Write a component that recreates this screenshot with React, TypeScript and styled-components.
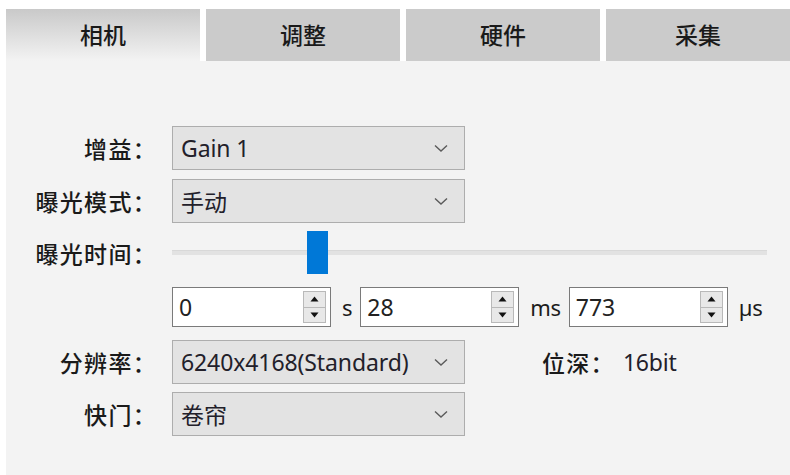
import React from "react";
import styled, { createGlobalStyle } from "styled-components";

const GlobalStyle = createGlobalStyle`
  html, body {
    margin: 0;
    padding: 0;
    background: #ffffff;
  }
  body {
    font-family: "Noto Sans", "Noto Sans CJK SC", sans-serif;
    color: #1c1c1c;
  }
`;

const Window = styled.div`
  width: 790px;
  height: 475px;
  padding: 9px 0 0 6px;
  box-sizing: border-box;
  display: flex;
  flex-direction: column;
  overflow: hidden;
`;

const TabBar = styled.div`
  display: flex;
  gap: 6px;
  height: 52px;
  flex: none;
`;

const Tab = styled.div<{ $active?: boolean; $grow?: boolean }>`
  width: ${(p) => (p.$grow ? "auto" : "194px")};
  flex: ${(p) => (p.$grow ? "1" : "none")};
  height: 52px;
  display: flex;
  align-items: center;
  justify-content: center;
  font-family: "Noto Sans CJK SC", sans-serif;
  font-weight: 500;
  font-size: 23px;
  color: #1a1a1a;
  background: ${(p) =>
    p.$active
      ? "linear-gradient(to bottom, #c9c9c9 0%, #dcdcdc 45%, #f3f3f3 100%)"
      : "#cbcbcb"};
  padding-bottom: 2px;
  box-sizing: border-box;
`;

const Panel = styled.div`
  flex: 1;
  background: #f3f3f3;
  padding-top: 65px;
`;

const Form = styled.div`
  display: flex;
  flex-direction: column;
`;

const Row = styled.div<{ $top: number; $h: number }>`
  display: flex;
  align-items: center;
  margin-top: ${(p) => p.$top}px;
  height: ${(p) => p.$h}px;
`;

const Label = styled.div`
  width: 151px;
  margin-right: 15px;
  text-align: right;
  font-family: "Noto Sans CJK SC", sans-serif;
  font-weight: 500;
  font-size: 23px;
  color: #1a1a1a;
  white-space: nowrap;
  letter-spacing: 1.3px;
`;

const Combo = styled.div`
  width: 293px;
  height: 100%;
  box-sizing: border-box;
  border: 1px solid #adadad;
  background: #e3e3e3;
  display: flex;
  align-items: center;
  padding: 0 16px 0 8px;
  font-size: 23px;
  color: #22202a;
`;

const ComboText = styled.span`
  flex: 1;
  white-space: nowrap;
  letter-spacing: -0.1px;
`;

const Chevron = () => (
  <svg width="14" height="9" viewBox="0 0 14 9">
    <path d="M1 1.5 L7 7 L13 1.5" fill="none" stroke="#5a5a5a" strokeWidth="1.4" />
  </svg>
);

const SliderTrack = styled.div`
  position: relative;
  width: 595px;
  height: 100%;
  display: flex;
  align-items: center;
`;

const Rail = styled.div`
  width: 100%;
  height: 5px;
  background: #e2e2e2;
  border-top: 1px solid #d8d8d8;
  box-sizing: border-box;
`;

const Thumb = styled.div`
  position: absolute;
  top: 0;
  width: 21px;
  height: 43px;
  background: #0078d7;
`;

const SpinBox = styled.div`
  width: 159px;
  height: 100%;
  box-sizing: border-box;
  border: 1px solid #7a7a7a;
  background: #ffffff;
  display: flex;
  align-items: flex-start;
  padding: 2px 4px 2px 6px;
  font-size: 23px;
  color: #222222;
`;

const SpinValue = styled.span`
  flex: 1;
  align-self: center;
`;

const SpinButtons = styled.div`
  width: 23px;
  height: 32px;
  display: flex;
  flex-direction: column;
  border: 1px solid #b9b9b9;
  box-sizing: border-box;
  margin-top: 1px;
`;

const SpinButton = styled.div`
  flex: 1;
  background: #e8e8e8;
  display: flex;
  align-items: center;
  justify-content: center;
  & + & {
    border-top: 1px solid #b9b9b9;
  }
`;

const Unit = styled.span`
  font-size: 22px;
  color: #1c1c1c;
  margin: 0 8px 0 11px;
  letter-spacing: -0.3px;
`;

const InfoLabel = styled.span`
  margin-left: 77px;
  font-family: "Noto Sans CJK SC", sans-serif;
  font-weight: 500;
  font-size: 23px;
  color: #1a1a1a;
  letter-spacing: 1.3px;
`;

const InfoValue = styled.span`
  margin-left: 8px;
  font-size: 23px;
  color: #22202a;
  letter-spacing: -0.2px;
`;

const Arrow = ({ up }: { up?: boolean }) => (
  <svg width="9" height="6" viewBox="0 0 9 6">
    <path d={up ? "M0.5 5.5 L4.5 0.5 L8.5 5.5 Z" : "M0.5 0.5 L4.5 5.5 L8.5 0.5 Z"} fill="#111" />
  </svg>
);

const Spin = ({ value }: { value: string }) => (
  <SpinBox>
    <SpinValue>{value}</SpinValue>
    <SpinButtons>
      <SpinButton>
        <Arrow up />
      </SpinButton>
      <SpinButton>
        <Arrow />
      </SpinButton>
    </SpinButtons>
  </SpinBox>
);

const Select = ({ value }: { value: string }) => (
  <Combo>
    <ComboText>{value}</ComboText>
    <Chevron />
  </Combo>
);

const tabs = ["相机", "调整", "硬件", "采集"];

export default function App() {
  const exposure = 0.227;
  return (
    <>
      <GlobalStyle />
      <Window>
        <TabBar>
          {tabs.map((t, i) => (
            <Tab key={t} $active={i === 0} $grow={i === tabs.length - 1}>
              {t}
            </Tab>
          ))}
        </TabBar>
        <Panel>
          <Form>
            <Row $top={0} $h={44}>
              <Label>增益：</Label>
              <Select value="Gain 1" />
            </Row>
            <Row $top={9} $h={44}>
              <Label>曝光模式：</Label>
              <Select value="手动" />
            </Row>
            <Row $top={8} $h={43}>
              <Label>曝光时间：</Label>
              <SliderTrack>
                <Rail />
                <Thumb style={{ left: `${exposure * 100}%` }} />
              </SliderTrack>
            </Row>
            <Row $top={13} $h={40}>
              <Label />
              <Spin value="0" />
              <Unit>s</Unit>
              <Spin value="28" />
              <Unit>ms</Unit>
              <Spin value="773" />
              <Unit>µs</Unit>
            </Row>
            <Row $top={13} $h={44}>
              <Label>分辨率：</Label>
              <Select value="6240x4168(Standard)" />
              <InfoLabel>位深：</InfoLabel>
              <InfoValue>16bit</InfoValue>
            </Row>
            <Row $top={8} $h={44}>
              <Label>快门：</Label>
              <Select value="卷帘" />
            </Row>
          </Form>
        </Panel>
      </Window>
    </>
  );
}
